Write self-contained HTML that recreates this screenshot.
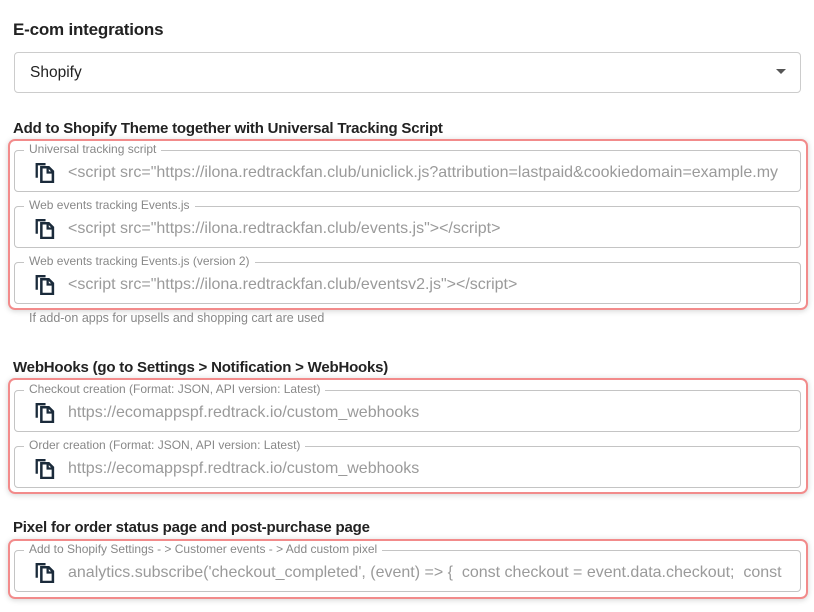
<!DOCTYPE html>
<html><head><style>
body{margin:0;width:814px;height:612px;background:#fff;font-family:"Liberation Sans",sans-serif;position:relative;overflow:hidden}
.a{position:absolute}
h1{position:absolute;margin:0;font-size:17px;font-weight:bold;color:#222;left:13px;top:20px;letter-spacing:-0.2px}
.h{position:absolute;margin:0;font-size:15px;font-weight:bold;color:#222;left:13px;letter-spacing:-0.2px}
.sel{position:absolute;left:14px;top:52px;width:785px;height:39px;border:1px solid #ccc;border-radius:4px;font-size:15.5px;color:#222}
.red{position:absolute;left:8px;width:796px;border:2px solid #f28b8b;border-radius:7px;box-shadow:0 1px 6px rgba(0,0,0,.18)}
.f{position:absolute;left:14px;width:785px;height:40px;border:1px solid #c4c4c4;border-radius:4px;background:#fff}
.lg{position:absolute;left:9px;top:-9px;background:#fff;padding:0 5px;font-size:12px;color:#888;white-space:nowrap;line-height:15px}
.v{position:absolute;left:53px;top:12px;font-size:16px;color:#9a9a9a;white-space:nowrap;width:718px;overflow:hidden;line-height:20px}
.ic{position:absolute;left:19px;top:11px}
</style></head><body>
<h1>E-com integrations</h1>
<div class="sel"><span class="a" style="left:15px;top:11px">Shopify</span><span class="a" style="right:14px;top:16px;width:0;height:0;border-left:5px solid transparent;border-right:5px solid transparent;border-top:5px solid #555"></span></div>

<div class="h" style="top:120px">Add to Shopify Theme together with Universal Tracking Script</div>
<div class="red" style="top:139px;height:167px"></div>
<div class="h" style="top:359px">WebHooks (go to Settings &gt; Notification &gt; WebHooks)</div>
<div class="red" style="top:378px;height:112px"></div>
<div class="h" style="top:519px">Pixel for order status page and post-purchase page</div>
<div class="red" style="top:539px;height:56px"></div>

<div class="a" style="left:29px;top:311px;font-size:12.5px;color:#888">If add-on apps for upsells and shopping cart are used</div>

<div class="f" style="top:150px"><span class="lg">Universal tracking script</span>
<svg class="ic" width="21" height="21" viewBox="0 0 20 20"><path d="M1.5 1h9.5v2.2H3.7V15H1.5z" fill="#1b2b3b"/><path d="M7 5h7l4 4v10H7z" fill="none" stroke="#1b2b3b" stroke-width="2.4"/><path d="M13 5v5h5" fill="none" stroke="#1b2b3b" stroke-width="2.2"/></svg>
<span class="v">&lt;script src="https://ilona.redtrackfan.club/uniclick.js?attribution=lastpaid&amp;cookiedomain=example.my</span></div>
<div class="f" style="top:206px"><span class="lg">Web events tracking Events.js</span>
<svg class="ic" width="21" height="21" viewBox="0 0 20 20"><path d="M1.5 1h9.5v2.2H3.7V15H1.5z" fill="#1b2b3b"/><path d="M7 5h7l4 4v10H7z" fill="none" stroke="#1b2b3b" stroke-width="2.4"/><path d="M13 5v5h5" fill="none" stroke="#1b2b3b" stroke-width="2.2"/></svg>
<span class="v">&lt;script src="https://ilona.redtrackfan.club/events.js"&gt;&lt;/script&gt;</span></div>
<div class="f" style="top:262px"><span class="lg">Web events tracking Events.js (version 2)</span>
<svg class="ic" width="21" height="21" viewBox="0 0 20 20"><path d="M1.5 1h9.5v2.2H3.7V15H1.5z" fill="#1b2b3b"/><path d="M7 5h7l4 4v10H7z" fill="none" stroke="#1b2b3b" stroke-width="2.4"/><path d="M13 5v5h5" fill="none" stroke="#1b2b3b" stroke-width="2.2"/></svg>
<span class="v">&lt;script src="https://ilona.redtrackfan.club/eventsv2.js"&gt;&lt;/script&gt;</span></div>

<div class="f" style="top:390px"><span class="lg">Checkout creation (Format: JSON, API version: Latest)</span>
<svg class="ic" width="21" height="21" viewBox="0 0 20 20"><path d="M1.5 1h9.5v2.2H3.7V15H1.5z" fill="#1b2b3b"/><path d="M7 5h7l4 4v10H7z" fill="none" stroke="#1b2b3b" stroke-width="2.4"/><path d="M13 5v5h5" fill="none" stroke="#1b2b3b" stroke-width="2.2"/></svg>
<span class="v">https://ecomappspf.redtrack.io/custom_webhooks</span></div>
<div class="f" style="top:446px"><span class="lg">Order creation (Format: JSON, API version: Latest)</span>
<svg class="ic" width="21" height="21" viewBox="0 0 20 20"><path d="M1.5 1h9.5v2.2H3.7V15H1.5z" fill="#1b2b3b"/><path d="M7 5h7l4 4v10H7z" fill="none" stroke="#1b2b3b" stroke-width="2.4"/><path d="M13 5v5h5" fill="none" stroke="#1b2b3b" stroke-width="2.2"/></svg>
<span class="v">https://ecomappspf.redtrack.io/custom_webhooks</span></div>

<div class="f" style="top:550px"><span class="lg">Add to Shopify Settings - &gt; Customer events - &gt; Add custom pixel</span>
<svg class="ic" width="21" height="21" viewBox="0 0 20 20"><path d="M1.5 1h9.5v2.2H3.7V15H1.5z" fill="#1b2b3b"/><path d="M7 5h7l4 4v10H7z" fill="none" stroke="#1b2b3b" stroke-width="2.4"/><path d="M13 5v5h5" fill="none" stroke="#1b2b3b" stroke-width="2.2"/></svg>
<span class="v">analytics.subscribe('checkout_completed', (event) =&gt; {&nbsp; const checkout = event.data.checkout;&nbsp; const c</span></div>
</body></html>
